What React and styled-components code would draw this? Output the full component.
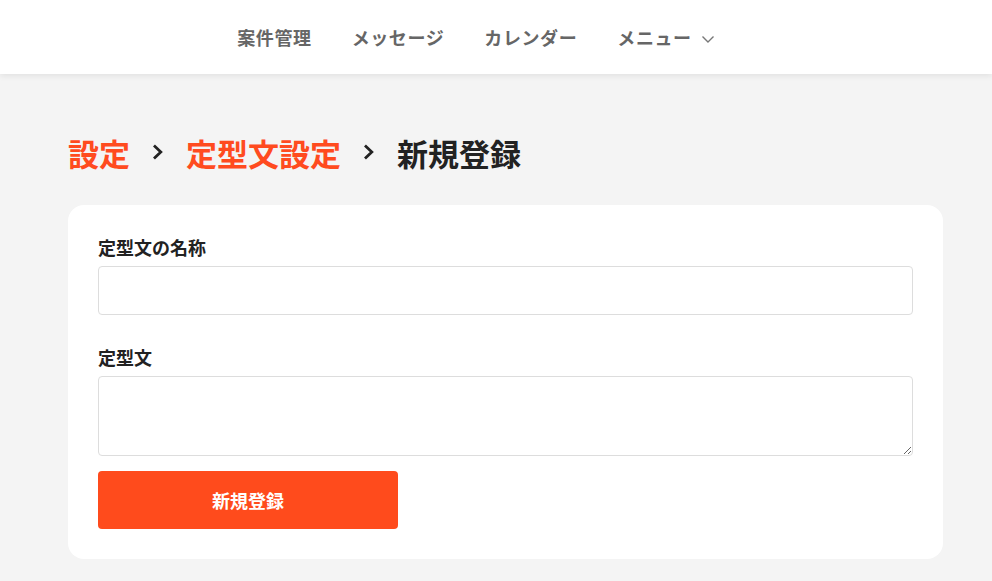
import styled, { createGlobalStyle } from 'styled-components';

const GlobalStyle = createGlobalStyle`
  * { box-sizing: border-box; }
  body {
    margin: 0;
    background: #f4f4f4;
    font-family: 'Noto Sans CJK JP', 'Noto Sans', sans-serif;
    color: #222;
  }
`;

const Chevron = () => (
  <svg width='12' height='16' viewBox='0 0 12 16' fill='none'>
    <path d='M3 2.5 L8.8 8 L3 13.5' stroke='currentColor' strokeWidth='2.8' strokeLinecap='square' />
  </svg>
);

const App = () => {
  return (
    <>
      <GlobalStyle />
      <Header>
        <Nav>
          <NavItem>案件管理</NavItem>
          <NavItem>メッセージ</NavItem>
          <NavItem>カレンダー</NavItem>
          <NavItem>
            メニュー
            <svg width='14' height='10' viewBox='0 0 14 10' fill='none'>
              <path d='M1.5 2.5 L7 8 L12.5 2.5' stroke='#777' strokeWidth='1.4' />
            </svg>
          </NavItem>
        </Nav>
      </Header>
      <Main>
        <Breadcrumb>
          <Crumb $link>設定</Crumb>
          <Sep><Chevron /></Sep>
          <Crumb $link>定型文設定</Crumb>
          <Sep><Chevron /></Sep>
          <Crumb>新規登録</Crumb>
        </Breadcrumb>
        <Card>
          <Field>
            <Label>定型文の名称</Label>
            <Input type='text' />
          </Field>
          <Field>
            <Label>定型文</Label>
            <TextArea />
          </Field>
          <SubmitButton type='button'>新規登録</SubmitButton>
        </Card>
      </Main>
    </>
  );
};

export default App;

const Header = styled.header`
  height: 74px;
  background: #fff;
  box-shadow: 0 2px 6px rgba(0, 0, 0, 0.08);
  display: flex;
  justify-content: center;
  align-items: center;
`;

const Nav = styled.nav`
  display: flex;
  gap: 40px;
  margin-right: 40px;
`;

const NavItem = styled.a`
  display: flex;
  align-items: center;
  gap: 9px;
  font-size: 18px;
  letter-spacing: 0.6px;
  font-weight: 700;
  color: #666;
  cursor: pointer;

  svg {
    margin-top: 3px;
  }
`;

const Main = styled.main`
  padding: 53px 49px 0 68px;
`;

const Breadcrumb = styled.div`
  display: flex;
  align-items: center;
  gap: 22px;
  height: 50px;
`;

const Crumb = styled.span`
  font-size: 31px;
  font-weight: 700;
  color: ${(p) => (p.$link ? '#ff4b1f' : '#222')};
`;

const Sep = styled.span`
  display: flex;
  color: #222;
`;

const Card = styled.section`
  margin-top: 28px;
  background: #fff;
  border-radius: 16px;
  padding: 30px 30px 30px;
  display: flex;
  flex-direction: column;
  gap: 15px;
`;

const Field = styled.div`
  display: flex;
  flex-direction: column;
  gap: 7px;
  & + & {
    margin-top: 15px;
  }
`;

const Label = styled.label`
  font-size: 18px;
  font-weight: 700;
  color: #222;
  line-height: 24px;
`;

const Input = styled.input`
  height: 49px;
  border: 1px solid #ddd;
  border-radius: 4px;
  font-size: 16px;
  padding: 0 12px;
  outline: none;
`;

const TextArea = styled.textarea`
  height: 80px;
  border: 1px solid #ddd;
  border-radius: 4px;
  font-size: 16px;
  padding: 10px 12px;
  font-family: inherit;
  outline: none;
`;

const SubmitButton = styled.button`
  width: 300px;
  height: 58px;
  border: none;
  border-radius: 4px;
  background: #ff4b1c;
  color: #fff;
  font-family: inherit;
  font-size: 18px;
  font-weight: 700;
  cursor: pointer;
`;
